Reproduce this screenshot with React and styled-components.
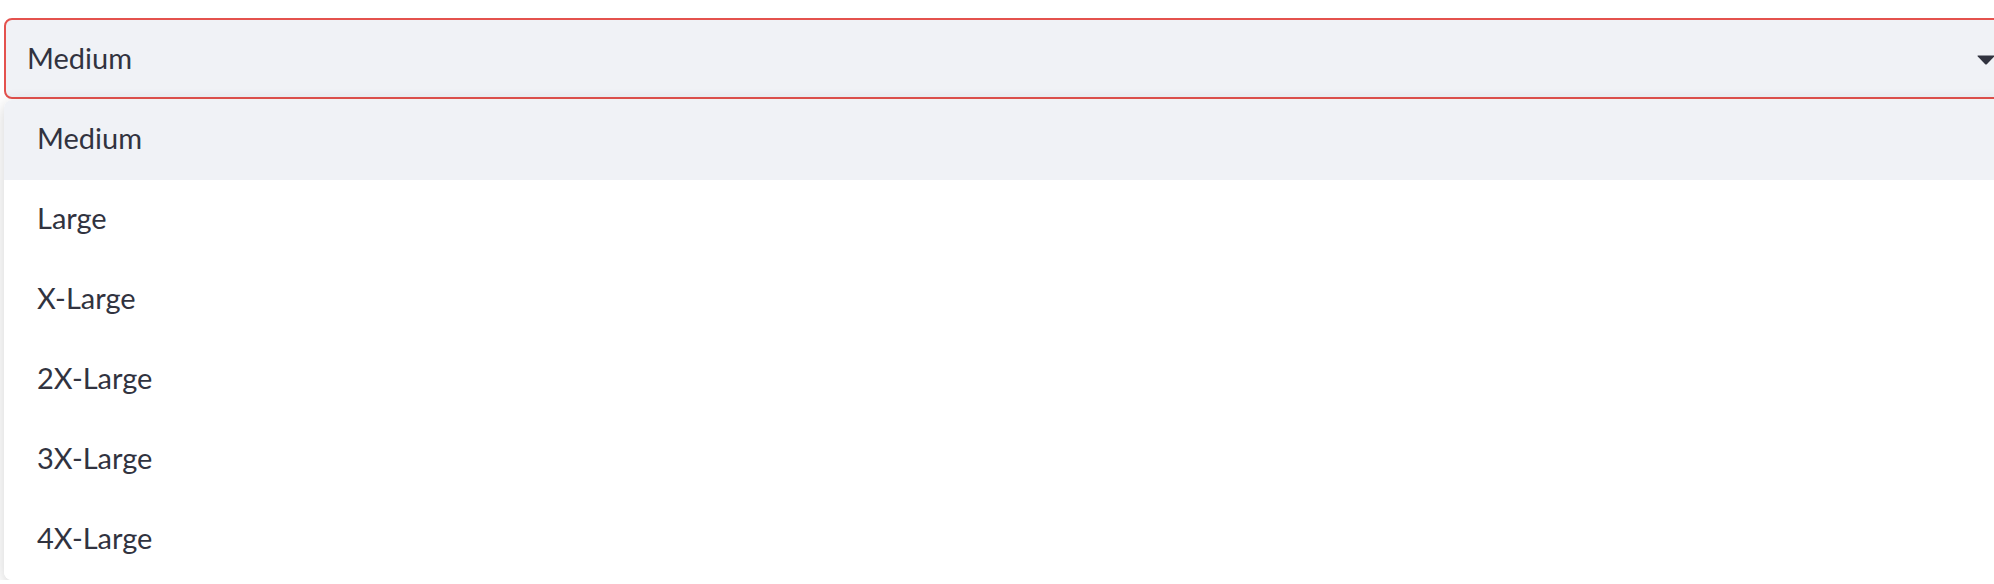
import React from "react";
import styled, { createGlobalStyle } from "styled-components";

const Global = createGlobalStyle`
  html, body {
    margin: 0;
    padding: 0;
    background: #ffffff;
    overflow: hidden;
  }
  body {
    font-family: Lato, "Noto Sans", sans-serif;
    color: #31333f;
  }
`;

const Page = styled.div`
  padding: 18px 0 0 4px;
  width: 2010px;
`;

const SelectBox = styled.div`
  box-sizing: border-box;
  height: 81px;
  display: flex;
  align-items: center;
  justify-content: space-between;
  padding: 0 17px 3px 21px;
  background: #f0f2f6;
  border: 2px solid #e4524e;
  border-radius: 8px;
  font-size: 29px;
  line-height: 1;
`;

const Caret = styled.svg`
  width: 18px;
  height: 10px;
  display: block;
  margin-top: 5px;
`;

const Menu = styled.ul`
  list-style: none;
  margin: 1px 0 0 0;
  padding: 0;
  background: #ffffff;
  border-radius: 8px;
  box-shadow: 0 4px 16px rgba(0, 0, 0, 0.18);
  overflow: hidden;
  position: relative;
  z-index: 1;
`;

const Option = styled.li`
  box-sizing: border-box;
  height: 80px;
  display: flex;
  align-items: center;
  padding: 0 0 5px 33px;
  font-size: 29px;
  line-height: 1;
  color: #31333f;
  background: ${(p) => (p.$active ? "#f0f2f6" : "#ffffff")};
`;

const options = ["Medium", "Large", "X-Large", "2X-Large", "3X-Large", "4X-Large"];

export default function App() {
  return (
    <>
      <Global />
      <Page>
        <SelectBox>
          <span>Medium</span>
          <Caret viewBox="0 0 18 10">
            <path d="M1 0.5 H17 Q18 0.5 17.2 1.5 L9.8 9.2 Q9 10 8.2 9.2 L0.8 1.5 Q0 0.5 1 0.5 Z" fill="#31333f" />
          </Caret>
        </SelectBox>
        <Menu>
          {options.map((o, i) => (
            <Option key={o} $active={i === 0}>
              {o}
            </Option>
          ))}
        </Menu>
      </Page>
    </>
  );
}
